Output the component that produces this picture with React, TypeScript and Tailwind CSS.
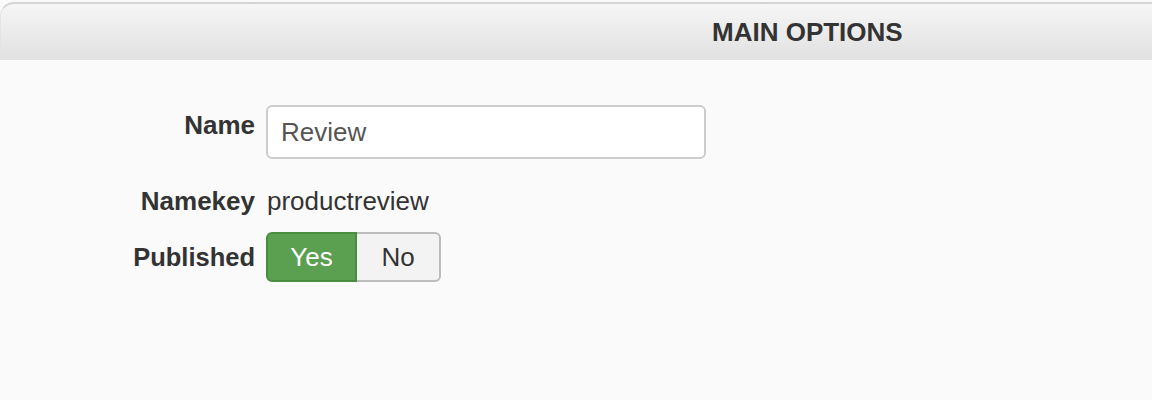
import React from 'react';

const font = { fontFamily: '"Liberation Sans", Arial, sans-serif' };

export default function App() {
  return <div className="w-[1152px] h-[400px] bg-[#fafafa] overflow-hidden text-[#333]" style={font}>
      <div className="pt-[2px]">
        <div className="h-[58px] border-t-2 border-l border-t-[#d4d4d4] border-l-[#e4e4e4] rounded-tl-[14px] bg-gradient-to-b from-[#f6f6f6] to-[#e1e1e1] flex items-center pl-[711px]">
          <h3 className="text-[26px] font-bold text-[#333] leading-none">MAIN OPTIONS</h3>
        </div>
      </div>
      <div className="pt-[45px] flex flex-col">
        <div className="flex items-start gap-[11px]">
          <label className="w-[255px] text-right font-bold text-[26px] leading-[36px] pt-[2px]">Name</label>
          <input readOnly value="Review" className="w-[440px] h-[54px] border-2 border-[#ccc] rounded-[6px] bg-white px-[13px] text-[26px] text-[#555] outline-none" style={font} />
        </div>
        <div className="flex items-center gap-[11px] mt-[24px]">
          <label className="w-[255px] text-right font-bold text-[26px] leading-[36px]">Namekey</label>
          <span className="text-[26px] leading-[36px] pl-[1px]">productreview</span>
        </div>
        <div className="flex items-center gap-[11px] mt-[13px]">
          <label className="w-[255px] text-right font-bold text-[25.5px] leading-[36px]">Published</label>
          <div className="flex h-[50px]">
            <button className="w-[91px] h-full bg-[#5b9f51] border-2 border-[#4a8c40] rounded-l-[6px] text-white text-[26px]" style={font}>Yes</button>
            <button className="w-[84px] h-full bg-[#f3f3f3] border-2 border-l-0 border-[#bdbdbd] rounded-r-[6px] text-[#333] text-[26px]" style={font}>No</button>
          </div>
        </div>
      </div>
    </div>;
}
